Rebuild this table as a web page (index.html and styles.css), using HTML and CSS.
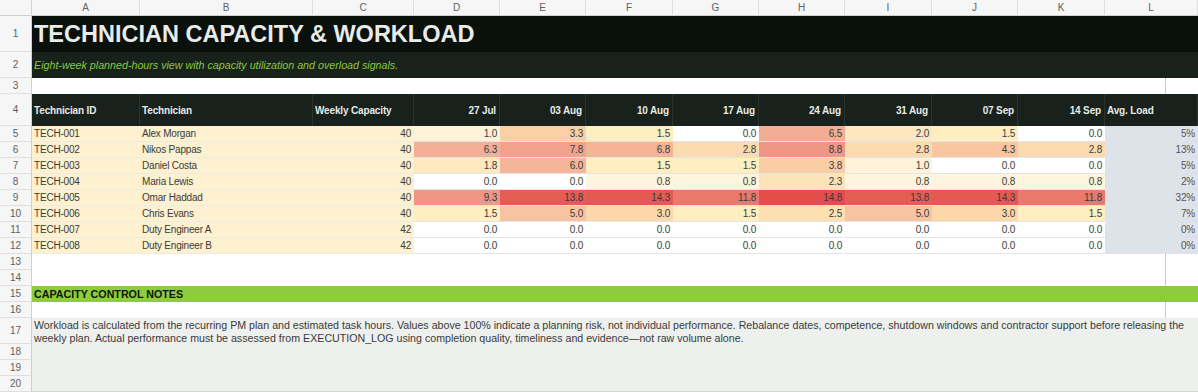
FILE: index.html
```html
<!DOCTYPE html>
<html>
<head>
<meta charset="utf-8">
<link rel="stylesheet" href="styles.css">
</head>
<body>
<div class="sheet">
  <div class="corner"></div>
  <div class="colh">A</div><div class="colh">B</div><div class="colh">C</div><div class="colh">D</div><div class="colh">E</div><div class="colh">F</div><div class="colh">G</div><div class="colh">H</div><div class="colh">I</div><div class="colh">J</div><div class="colh">K</div><div class="colh">L</div>

  <div class="rn">1</div>
  <div class="title span-all">TECHNICIAN CAPACITY &amp; WORKLOAD</div>

  <div class="rn">2</div>
  <div class="subtitle span-all">Eight-week planned-hours view with capacity utilization and overload signals.</div>

  <div class="rn">3</div>
  <div class="blank span-all"></div>

  <div class="rn">4</div>
  <div class="hd">Technician ID</div>
  <div class="hd">Technician</div>
  <div class="hd">Weekly Capacity</div>
  <div class="hd num">27 Jul</div>
  <div class="hd num">03 Aug</div>
  <div class="hd num">10 Aug</div>
  <div class="hd num">17 Aug</div>
  <div class="hd num">24 Aug</div>
  <div class="hd num">31 Aug</div>
  <div class="hd num">07 Sep</div>
  <div class="hd num">14 Sep</div>
  <div class="hd">Avg. Load</div>

  <div class="rn">5</div>
  <div class="c y">TECH-001</div><div class="c y">Alex Morgan</div><div class="c y num">40</div>
  <div class="c num v10">1.0</div><div class="c num v33">3.3</div><div class="c num v15">1.5</div><div class="c num v00">0.0</div><div class="c num v65">6.5</div><div class="c num v20">2.0</div><div class="c num v15">1.5</div><div class="c num v00">0.0</div>
  <div class="c avg num">5%</div>

  <div class="rn">6</div>
  <div class="c y">TECH-002</div><div class="c y">Nikos Pappas</div><div class="c y num">40</div>
  <div class="c num v63">6.3</div><div class="c num v78">7.8</div><div class="c num v68">6.8</div><div class="c num v28">2.8</div><div class="c num v88">8.8</div><div class="c num v28">2.8</div><div class="c num v43">4.3</div><div class="c num v28">2.8</div>
  <div class="c avg num">13%</div>

  <div class="rn">7</div>
  <div class="c y">TECH-003</div><div class="c y">Daniel Costa</div><div class="c y num">40</div>
  <div class="c num v18">1.8</div><div class="c num v60">6.0</div><div class="c num v15">1.5</div><div class="c num v15">1.5</div><div class="c num v38">3.8</div><div class="c num v10">1.0</div><div class="c num v00">0.0</div><div class="c num v00">0.0</div>
  <div class="c avg num">5%</div>

  <div class="rn">8</div>
  <div class="c y">TECH-004</div><div class="c y">Maria Lewis</div><div class="c y num">40</div>
  <div class="c num v00">0.0</div><div class="c num v00">0.0</div><div class="c num v08">0.8</div><div class="c num v08">0.8</div><div class="c num v23">2.3</div><div class="c num v08">0.8</div><div class="c num v08">0.8</div><div class="c num v08">0.8</div>
  <div class="c avg num">2%</div>

  <div class="rn">9</div>
  <div class="c y">TECH-005</div><div class="c y">Omar Haddad</div><div class="c y num">40</div>
  <div class="c num v93">9.3</div><div class="c num v138">13.8</div><div class="c num v143">14.3</div><div class="c num v118">11.8</div><div class="c num v148">14.8</div><div class="c num v138">13.8</div><div class="c num v143">14.3</div><div class="c num v118">11.8</div>
  <div class="c avg num">32%</div>

  <div class="rn">10</div>
  <div class="c y">TECH-006</div><div class="c y">Chris Evans</div><div class="c y num">40</div>
  <div class="c num v15">1.5</div><div class="c num v50">5.0</div><div class="c num v30">3.0</div><div class="c num v15">1.5</div><div class="c num v25">2.5</div><div class="c num v50">5.0</div><div class="c num v30">3.0</div><div class="c num v15">1.5</div>
  <div class="c avg num">7%</div>

  <div class="rn">11</div>
  <div class="c y">TECH-007</div><div class="c y">Duty Engineer A</div><div class="c y num">42</div>
  <div class="c num v00">0.0</div><div class="c num v00">0.0</div><div class="c num v00">0.0</div><div class="c num v00">0.0</div><div class="c num v00">0.0</div><div class="c num v00">0.0</div><div class="c num v00">0.0</div><div class="c num v00">0.0</div>
  <div class="c avg num">0%</div>

  <div class="rn">12</div>
  <div class="c y">TECH-008</div><div class="c y">Duty Engineer B</div><div class="c y num">42</div>
  <div class="c num v00">0.0</div><div class="c num v00">0.0</div><div class="c num v00">0.0</div><div class="c num v00">0.0</div><div class="c num v00">0.0</div><div class="c num v00">0.0</div><div class="c num v00">0.0</div><div class="c num v00">0.0</div>
  <div class="c avg num">0%</div>

  <div class="rn">13</div>
  <div class="blank span-all"></div>

  <div class="rn">14</div>
  <div class="blank span-all"></div>

  <div class="rn">15</div>
  <div class="section span-all">CAPACITY CONTROL NOTES</div>

  <div class="rn">16</div>
  <div class="blank span-all"></div>

  <div class="rn">17</div>
  <div class="notes span-all">Workload is calculated from the recurring PM plan and estimated task hours. Values above 100% indicate a planning risk, not individual performance. Rebalance dates, competence, shutdown windows and contractor support before releasing the weekly plan. Actual performance must be assessed from EXECUTION_LOG using completion quality, timeliness and evidence—not raw volume alone.</div>
  <div class="rn">18</div>
  <div class="rn">19</div>
  <div class="rn">20</div>
</div>
</body>
</html>
```
FILE: styles.css
```css
html, body {
  margin: 0;
  padding: 0;
  background: #ffffff;
}
body {
  font-family: "Liberation Sans", Arial, Helvetica, sans-serif;
  width: 1198px;
  height: 392px;
  overflow: hidden;
}
.sheet {
  display: grid;
  grid-template-columns: 32px 108px 173px 101px 86px 86px 87px 86px 86px 87px 86px 87px 93px;
  grid-template-rows: 16px 36px 26px 16px 32px repeat(8, 16px) 16px 16px 16px 16px 26px 16px 16px 16px;
}
.corner {
  background: #f6f6f6;
  border-right: 1px solid #d4d4d4;
  border-bottom: 1px solid #cfcfcf;
}
.colh {
  background: #f6f6f6;
  border-right: 1px solid #dedede;
  border-bottom: 1px solid #cfcfcf;
  font-size: 10px;
  color: #606060;
  text-align: center;
  line-height: 15px;
}
.rn {
  grid-column: 1;
  background: #f6f6f6;
  border-right: 1px solid #cfcfcf;
  border-bottom: 1px solid #dedede;
  font-size: 10px;
  color: #606060;
  display: flex;
  align-items: center;
  justify-content: center;
  box-sizing: border-box;
}
.span-all {
  grid-column: 2 / -1;
}
.title {
  background: #0a110c;
  color: #e8ebe8;
  font-weight: bold;
  font-size: 23.5px;
  display: flex;
  align-items: center;
  padding-left: 2px;
}
.subtitle {
  background: #18221b;
  color: #8dc63f;
  font-style: italic;
  font-size: 10.7px;
  display: flex;
  align-items: center;
  padding-left: 2px;
}
.blank {
  background: linear-gradient(to right, transparent 1133px, #c8c8c8 1133px, #c8c8c8 1134px, transparent 1134px);
}
.hd {
  background: #18211b;
  color: #e6e9e6;
  font-weight: bold;
  font-size: 10px;
  letter-spacing: -0.15px;
  display: flex;
  align-items: center;
  padding: 0 3px 0 2px;
  border-right: 1px solid #2a342d;
  box-sizing: border-box;
}
.hd:last-child {
  border-right: none;
}
.hd.num {
  justify-content: flex-end;
}
.c {
  font-size: 10px;
  letter-spacing: -0.2px;
  color: #3a3a3a;
  display: flex;
  align-items: center;
  padding: 0 3px 0 2px;
  border-bottom: 1px solid #e4e4e4;
  box-sizing: border-box;
  white-space: nowrap;
}
.c.num {
  justify-content: flex-end;
}
.y {
  background: #fef1cf;
  border-bottom-color: #ecebe4;
}
.avg {
  background: #dde3e8;
  border-bottom-color: #dde3e8;
  color: #555;
}
.v00 { background: #ffffff; }
.v08 { background: #fef5de; }
.v10 { background: #fef2d8; }
.v15 { background: #feeec0; }
.v18 { background: #fde9bd; }
.v20 { background: #fde7c0; }
.v23 { background: #fde3b8; }
.v25 { background: #fde0b1; }
.v28 { background: #fcdbb0; }
.v30 { background: #fcd7aa; }
.v33 { background: #fbd0a5; }
.v38 { background: #fbcda5; }
.v43 { background: #f9c6a0; }
.v50 { background: #f8c3a0; }
.v60 { background: #f5b598; }
.v63 { background: #f4b095; }
.v65 { background: #f3ad92; }
.v68 { background: #f4b395; }
.v78 { background: #f2a28a; }
.v88 { background: #ef9784; }
.v93 { background: #ef9684; }
.v118 { background: #e9796a; }
.v138 { background: #e55c52; }
.v143 { background: #e55a50; }
.v148 { background: #e44d4a; }
.section {
  background: #8dcb3f;
  color: #0d150f;
  font-weight: bold;
  font-size: 10.7px;
  display: flex;
  align-items: center;
  padding-left: 2px;
}
.notes {
  grid-row: span 4;
  background: #eef0ee;
  color: #3a3a3a;
  font-size: 10.65px;
  line-height: 13px;
  padding: 1px 2px 0 2px;
  border-bottom: 1px solid #d6d6d6;
  box-sizing: border-box;
}
```
